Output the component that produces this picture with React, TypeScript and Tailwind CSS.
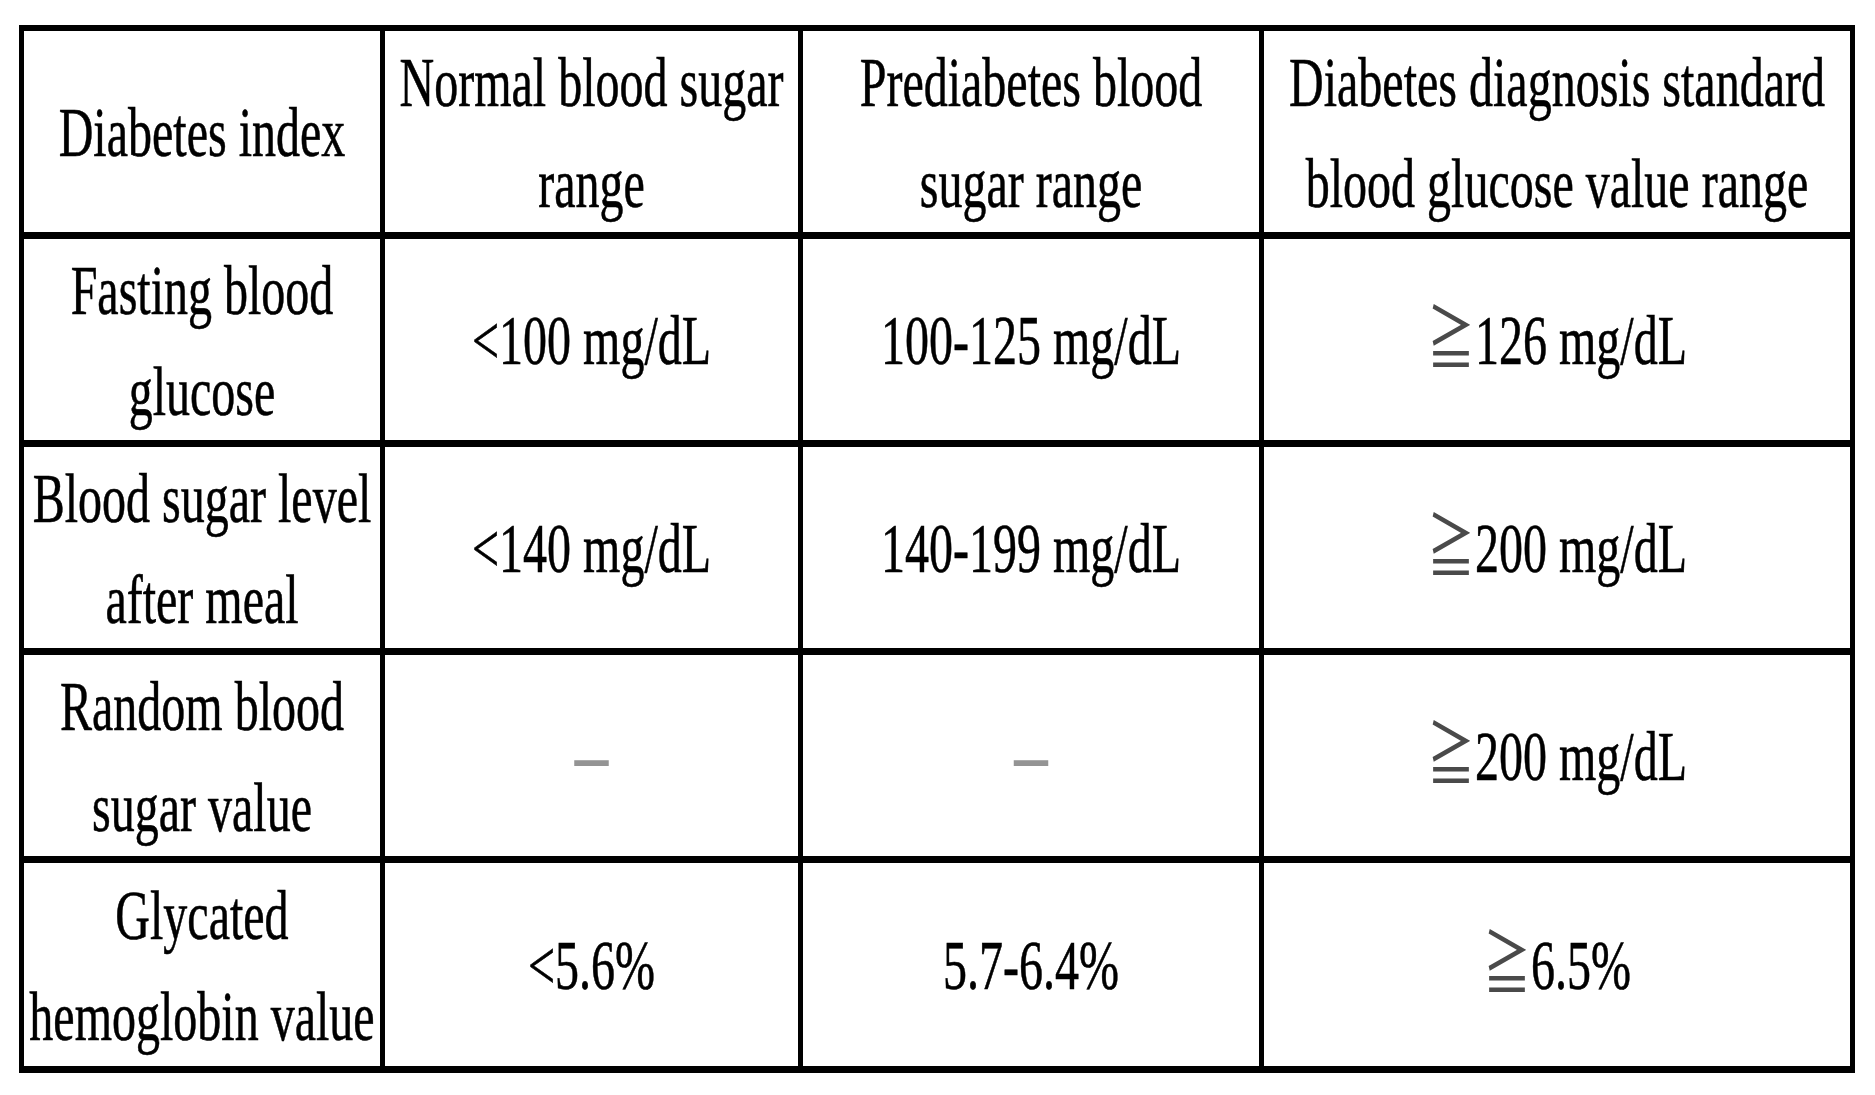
import React from "react";

type CellContent = { lines?: string[]; value?: string; dash?: boolean };

const header: string[][] = [
  ["Diabetes index"],
  ["Normal blood sugar", "range"],
  ["Prediabetes blood", "sugar range"],
  ["Diabetes diagnosis standard", "blood glucose value range"],
];

const body: CellContent[][] = [
  [
    { lines: ["Fasting blood", "glucose"] },
    { value: "<100 mg/dL" },
    { value: "100-125 mg/dL" },
    { value: "≧126 mg/dL" },
  ],
  [
    { lines: ["Blood sugar level", "after meal"] },
    { value: "<140 mg/dL" },
    { value: "140-199 mg/dL" },
    { value: "≧200 mg/dL" },
  ],
  [
    { lines: ["Random blood", "sugar value"] },
    { dash: true },
    { dash: true },
    { value: "≧200 mg/dL" },
  ],
  [
    { lines: ["Glycated", "hemoglobin value"] },
    { value: "<5.6%" },
    { value: "5.7-6.4%" },
    { value: "≧6.5%" },
  ],
];

function Lines({ lines }: { lines: string[] }) {
  return (
    <span className="block origin-center scale-y-[1.47] whitespace-nowrap text-center text-[48px] leading-[69px] text-black [font-family:'Liberation_Serif','Times_New_Roman',serif] [-webkit-text-stroke:0.4px_#000]">
      {lines.map((l, i) => (
        <React.Fragment key={i}>
          {i > 0 && <br />}
          {l}
        </React.Fragment>
      ))}
    </span>
  );
}

function Value({ value }: { value: string }) {
  const hasGe = value.startsWith("≧");
  const rest = hasGe ? value.slice(1) : value;
  return (
    <span className="block origin-center scale-y-[1.47] whitespace-nowrap text-center text-[48px] leading-[69px] text-black [font-family:'Liberation_Serif','Times_New_Roman',serif] [-webkit-text-stroke:0.4px_#000]">
      {hasGe && (
        <span className="leading-none text-[#4a4a4a] [font-family:'Noto_Sans_CJK_JP','DejaVu_Sans',sans-serif] [-webkit-text-stroke:0px_transparent]">
          ≧
        </span>
      )}
      {rest}
    </span>
  );
}

function Dash() {
  return (
    <span className="block origin-center -translate-y-[3px] scale-y-[3.4] whitespace-nowrap text-center text-[34px] leading-none text-[#949494] [font-family:'Liberation_Serif','Times_New_Roman',serif]">
      —
    </span>
  );
}

function Cell({ children }: { children: React.ReactNode }) {
  return (
    <div className="flex items-center justify-center overflow-visible bg-white">
      {children}
    </div>
  );
}

export default function App() {
  return (
    <div className="min-h-[1095px] w-full bg-white pl-[19px] pt-[25px]">
      <div className="grid w-fit grid-cols-[356px_413px_456px_586px] grid-rows-[201px_201px_201px_201px_203px] gap-x-[5px] gap-y-[7px] bg-black px-[5px] pt-[6px] pb-[7px]">
        {header.map((h, i) => (
          <Cell key={`h${i}`}>
            <Lines lines={h} />
          </Cell>
        ))}
        {body.map((row, r) =>
          row.map((c, i) => (
            <Cell key={`r${r}c${i}`}>
              {c.lines ? (
                <Lines lines={c.lines} />
              ) : c.dash ? (
                <Dash />
              ) : (
                <Value value={c.value ?? ""} />
              )}
            </Cell>
          ))
        )}
      </div>
    </div>
  );
}
